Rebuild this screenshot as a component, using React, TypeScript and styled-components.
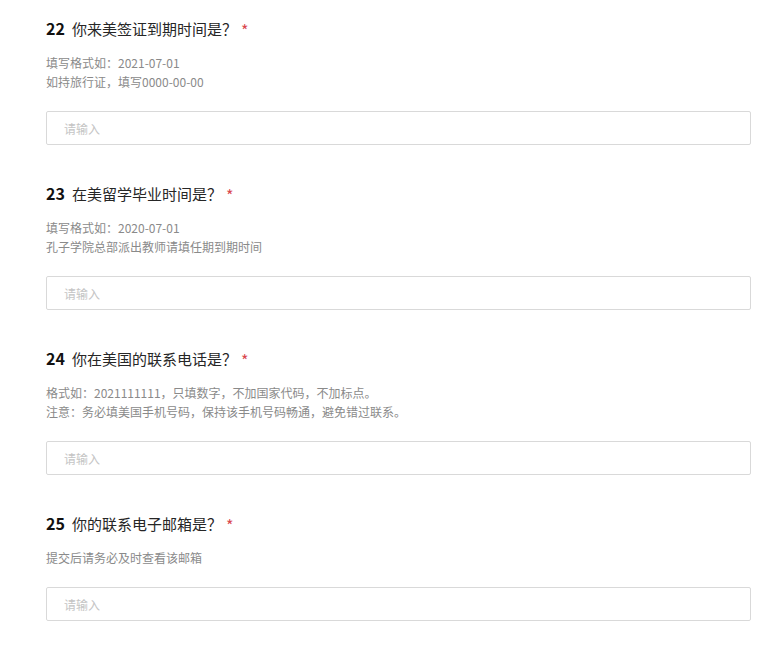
import styled, { createGlobalStyle } from 'styled-components';

const GlobalStyle = createGlobalStyle`
  body {
    margin: 0;
    background: #ffffff;
    font-family: "Microsoft YaHei", "Noto Sans CJK SC", sans-serif;
  }
`;

type Question = {
  no: number;
  title: string;
  tips: string[];
};

const questions: Question[] = [
  {
    no: 22,
    title: '你来美签证到期时间是？',
    tips: ['填写格式如：2021-07-01', '如持旅行证，填写0000-00-00'],
  },
  {
    no: 23,
    title: '在美留学毕业时间是？',
    tips: ['填写格式如：2020-07-01', '孔子学院总部派出教师请填任期到期时间'],
  },
  {
    no: 24,
    title: '你在美国的联系电话是？',
    tips: [
      '格式如：2021111111，只填数字，不加国家代码，不加标点。',
      '注意：务必填美国手机号码，保持该手机号码畅通，避免错过联系。',
    ],
  },
  {
    no: 25,
    title: '你的联系电子邮箱是？',
    tips: ['提交后请务必及时查看该邮箱'],
  },
];

const App = () => {
  return (
    <>
      <GlobalStyle />
      <Form>
        {questions.map((q) => (
          <Field key={q.no}>
            <Title>
              <No>{q.no}</No>
              <span>{q.title}</span>
              <Required>*</Required>
            </Title>
            <Tips>
              {q.tips.map((t) => (
                <Tip key={t}>{t}</Tip>
              ))}
            </Tips>
            <StyledInput placeholder="请输入" />
          </Field>
        ))}
      </Form>
    </>
  );
};

export default App;

const Form = styled.div`
  padding: 18px 31px 0 46px;
  display: flex;
  flex-direction: column;
  gap: 38px;
`;

const Field = styled.div`
  display: flex;
  flex-direction: column;
`;

const Title = styled.div`
  display: flex;
  align-items: center;
  height: 20px;
  font-size: 15px;
  color: #262626;
`;

const No = styled.span`
  font-weight: bold;
  font-size: 16px;
  margin-right: 7px;
  color: #111;
`;

const Required = styled.span`
  color: #d9474f;
  font-size: 16px;
  margin-left: 4px;
  padding-top: 3px;
`;

const Tips = styled.div`
  margin-top: 15px;
  display: flex;
  flex-direction: column;
`;

const Tip = styled.div`
  font-size: 12px;
  line-height: 19px;
  color: #8a8a8a;
  white-space: nowrap;
`;

const StyledInput = styled.input`
  margin-top: 20px;
  box-sizing: border-box;
  width: 100%;
  height: 34px;
  border: 1px solid #d9d9d9;
  border-radius: 2px;
  padding: 0 17px;
  font-family: "Microsoft YaHei", "Noto Sans CJK SC", sans-serif;
  font-size: 12px;
  color: #333;
  outline: none;
  &::placeholder {
    color: #c4c4c4;
  }
`;
